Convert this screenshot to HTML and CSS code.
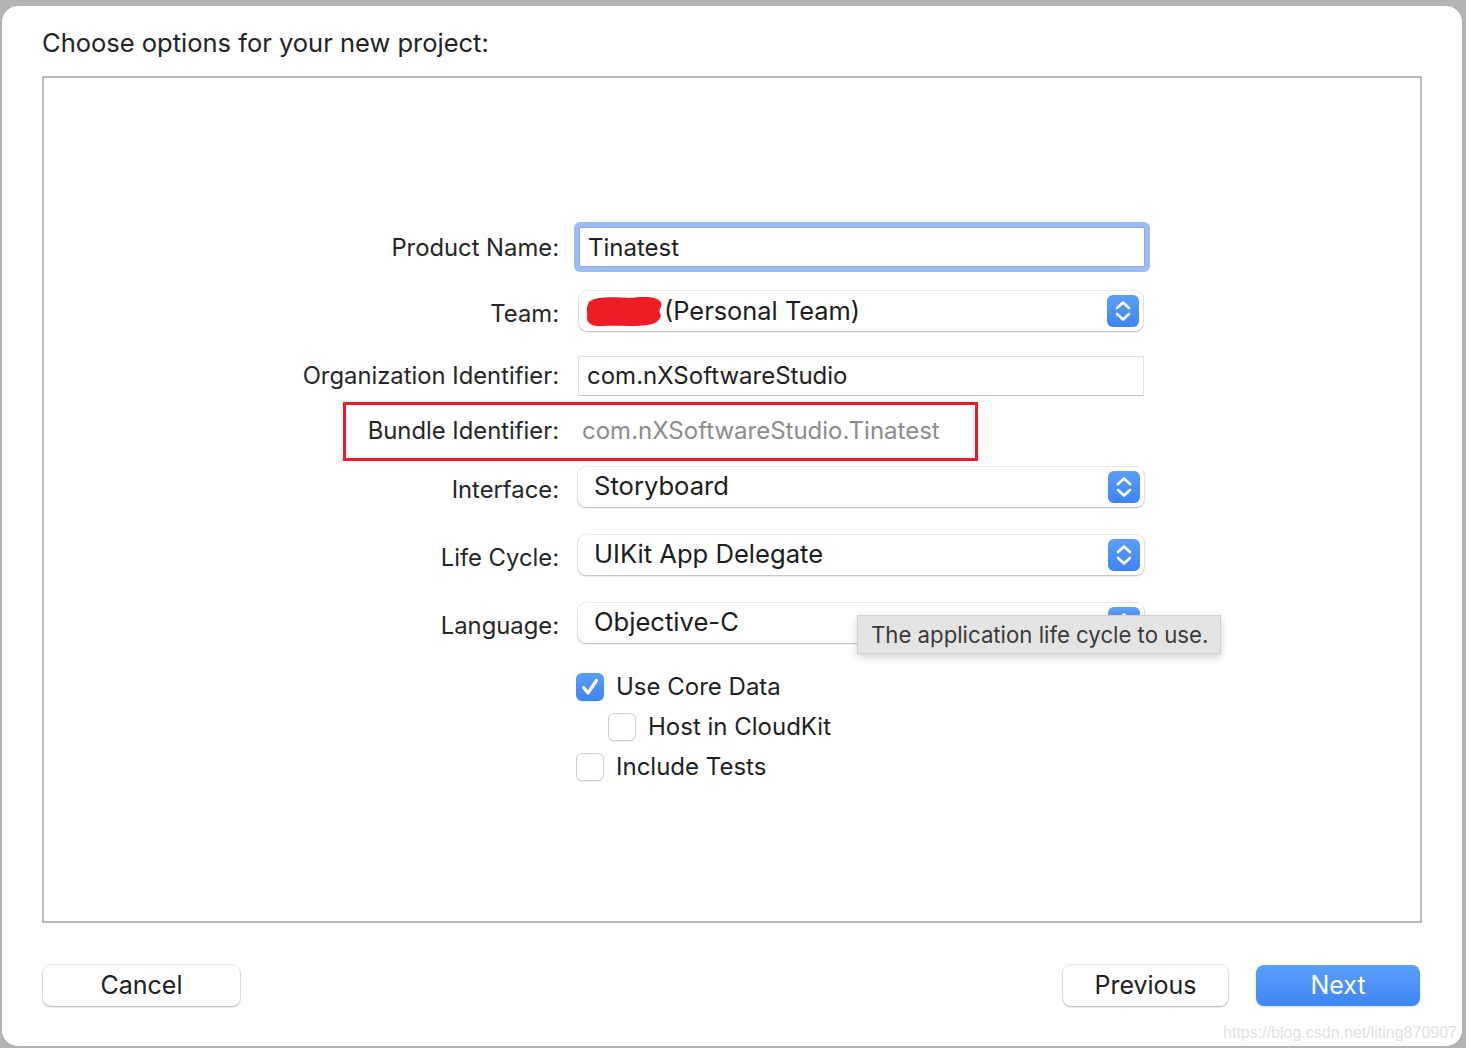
FILE: index.html
```html
<!DOCTYPE html>
<html lang="en">
<head>
  <meta charset="UTF-8">
  <title>Choose options for your new project</title>
  <link rel="stylesheet" href="styles.css">
</head>
<body>
  <div class="window">
    <h1 class="title">Choose options for your new project:</h1>

    <div class="panel">
      <div class="form">
        <div class="row row-product">
          <label class="label">Product Name:</label>
          <div class="field focused">Tinatest</div>
        </div>

        <div class="row row-team">
          <label class="label">Team:</label>
          <div class="popup popup-team">
            <svg class="scribble" width="78" height="34" viewBox="0 0 78 34">
              <path d="M4 8 C10 2 30 3 44 4 C56 3 70 1 76 8 C78 13 73 15 75 19 C78 24 72 30 62 31 C48 33 30 31 16 32 C8 33 1 29 2 23 C3 19 0 15 4 8 Z" fill="#ee1c25"/>
            </svg>
            <span class="popup-text">(Personal Team)</span>
            <span class="stepper">
              <svg width="32" height="32" viewBox="0 0 32 32">
                <path d="M10 13 L16 7.5 L22 13 M10 19 L16 24.5 L22 19" fill="none" stroke="#fff" stroke-width="2.6" stroke-linecap="round" stroke-linejoin="round"/>
              </svg>
            </span>
          </div>
        </div>

        <div class="row row-org">
          <label class="label">Organization Identifier:</label>
          <div class="field">com.nXSoftwareStudio</div>
        </div>

        <div class="row row-bundle">
          <label class="label">Bundle Identifier:</label>
          <div class="value-muted">com.nXSoftwareStudio.Tinatest</div>
        </div>

        <div class="row row-popup row-interface">
          <label class="label">Interface:</label>
          <div class="popup">
            <span class="popup-text">Storyboard</span>
            <span class="stepper">
              <svg width="32" height="32" viewBox="0 0 32 32">
                <path d="M10 13 L16 7.5 L22 13 M10 19 L16 24.5 L22 19" fill="none" stroke="#fff" stroke-width="2.6" stroke-linecap="round" stroke-linejoin="round"/>
              </svg>
            </span>
          </div>
        </div>

        <div class="row row-popup">
          <label class="label">Life Cycle:</label>
          <div class="popup">
            <span class="popup-text">UIKit App Delegate</span>
            <span class="stepper">
              <svg width="32" height="32" viewBox="0 0 32 32">
                <path d="M10 13 L16 7.5 L22 13 M10 19 L16 24.5 L22 19" fill="none" stroke="#fff" stroke-width="2.6" stroke-linecap="round" stroke-linejoin="round"/>
              </svg>
            </span>
          </div>
        </div>

        <div class="row row-popup row-language">
          <label class="label">Language:</label>
          <div class="popup">
            <span class="popup-text">Objective-C</span>
            <span class="stepper">
              <svg width="32" height="32" viewBox="0 0 32 32">
                <path d="M10 13 L16 7.5 L22 13 M10 19 L16 24.5 L22 19" fill="none" stroke="#fff" stroke-width="2.6" stroke-linecap="round" stroke-linejoin="round"/>
              </svg>
            </span>
          </div>
          <div class="tooltip">The application life cycle to use.</div>
        </div>

        <div class="row row-check row-check-first">
          <span></span>
          <div class="check">
            <span class="box checked">
              <svg width="28" height="28" viewBox="0 0 28 28">
                <path d="M7.5 14.5 L12 20 L20.5 7.5" fill="none" stroke="#fff" stroke-width="3.2" stroke-linecap="round" stroke-linejoin="round"/>
              </svg>
            </span>
            <span class="check-text">Use Core Data</span>
          </div>
        </div>

        <div class="row row-check">
          <span></span>
          <div class="check indent">
            <span class="box"></span>
            <span class="check-text">Host in CloudKit</span>
          </div>
        </div>

        <div class="row row-check">
          <span></span>
          <div class="check">
            <span class="box"></span>
            <span class="check-text">Include Tests</span>
          </div>
        </div>
      </div>
    </div>

    <div class="footer">
      <button class="btn btn-cancel">Cancel</button>
      <div class="footer-right">
        <button class="btn btn-previous">Previous</button>
        <button class="btn btn-next">Next</button>
      </div>
    </div>

    <div class="watermark">https://blog.csdn.net/liting870907</div>
  </div>
</body>
</html>
```

FILE: styles.css
```css
html, body {
  margin: 0;
  padding: 0;
  height: 1048px;
  overflow: hidden;
}

body {
  background-color: #b3b3b3;
  font-family: Inter, "Noto Sans", sans-serif;
  color: #222;
}

.window {
  position: relative;
  margin: 6px 4px 0 2px;
  height: 1040px;
  background-color: #fff;
  border-radius: 16px;
  box-sizing: border-box;
  padding: 22px 40px 0 40px;
}

.title {
  margin: 0;
  font-size: 25.5px;
  font-weight: 400;
  line-height: 30px;
  color: #232323;
}

.panel {
  margin-top: 18px;
  height: 847px;
  border: 2px solid #b9b9b9;
  box-sizing: border-box;
  padding-top: 144px;
}

.form {
  display: flex;
  flex-direction: column;
}

.row {
  position: relative;
  display: grid;
  grid-template-columns: 515px 566px;
  column-gap: 19px;
  align-items: center;
  height: 40px;
}

.label {
  text-align: right;
  font-size: 23.8px;
  color: #262626;
}

.row-popup .label,
.row-team .label {
  padding-top: 5px;
}

.row-product {
  height: 50px;
}

.row-team {
  margin-top: 19px;
}

.row-org {
  margin-top: 24px;
  height: 41px;
}

.row-bundle {
  margin-top: 14px;
}

.row-popup {
  margin-top: 28px;
}

.row-interface {
  margin-top: 17px;
}

/* text fields */
.field {
  height: 40px;
  box-sizing: border-box;
  padding-left: 8px;
  display: flex;
  align-items: center;
  font-size: 24px;
  color: #1e1e1e;
  background: #fff;
  border: 1px solid #e2e2e2;
  border-bottom-color: #c2c2c2;
}

.field.focused {
  margin-left: 1px;
  width: 566px;
  border: 1px solid #8ea9dc;
  border-radius: 2px;
  box-shadow: 0 0 0 5px #9dbbf3;
}

.value-muted {
  padding-left: 4px;
  font-size: 24px;
  color: #8c8c8c;
}

/* annotation box around bundle identifier */
.row-bundle::before {
  content: "";
  position: absolute;
  left: 299px;
  top: -8px;
  width: 635px;
  height: 59px;
  box-sizing: border-box;
  border: 3px solid #e81d27;
}

/* pop-up buttons */
.popup {
  height: 40px;
  box-sizing: border-box;
  display: flex;
  align-items: center;
  padding: 0 4px 0 16px;
  background: #fff;
  border-radius: 8px;
  box-shadow: 0 0 0 1px rgba(0, 0, 0, 0.07), 0 1px 2px rgba(0, 0, 0, 0.22);
}

.popup-team {
  margin-left: 1px;
  width: 564px;
  padding-left: 6px;
}

.scribble {
  margin-right: 1px;
}

.popup-text {
  flex: 1;
  font-size: 25.6px;
  color: #1c1c1c;
  line-height: 1;
  padding-bottom: 3px;
}

.popup-team .popup-text {
  font-size: 25.4px;
  padding-bottom: 0;
}

.stepper {
  width: 32px;
  height: 32px;
  border-radius: 6px;
  background: linear-gradient(#5d9ff9, #3d83f5);
  display: flex;
}

/* tooltip */
.tooltip {
  position: absolute;
  left: 813px;
  top: 12px;
  width: 364px;
  height: 39px;
  box-sizing: border-box;
  padding-left: 13px;
  display: flex;
  align-items: center;
  font-size: 22.2px;
  color: #3a3a3a;
  background: #e4e4e4;
  border: 1px solid #d2d2d2;
  box-shadow: 0 3px 8px rgba(0, 0, 0, 0.18);
  z-index: 2;
}

/* checkboxes */
.row-check {
  height: 28px;
  margin-top: 12px;
}

.row-check-first {
  margin-top: 29px;
}

.check {
  display: flex;
  align-items: center;
  margin-left: -2px;
}

.check.indent {
  margin-left: 30px;
}

.box {
  width: 28px;
  height: 28px;
  box-sizing: border-box;
  border-radius: 6px;
  background: #fff;
  border: 1px solid #cfcfcf;
  box-shadow: 0 1px 1px rgba(0, 0, 0, 0.08);
  display: flex;
}

.box.checked {
  border: none;
  background: linear-gradient(#5a9df9, #3e84f5);
}

.check-text {
  margin-left: 12px;
  font-size: 24px;
  color: #1f1f1f;
}

/* footer buttons */
.footer {
  margin-top: 42px;
  display: flex;
  justify-content: space-between;
  padding-left: 1px;
  padding-right: 2px;
}

.footer-right {
  display: flex;
  gap: 28px;
}

.btn {
  height: 41px;
  border: none;
  border-radius: 8px;
  font-family: Inter, "Noto Sans", sans-serif;
  font-size: 25px;
  color: #202020;
  background: #fff;
  box-shadow: 0 0 0 1px rgba(0, 0, 0, 0.08), 0 1px 2px rgba(0, 0, 0, 0.25);
  padding: 0 0 2px 0;
}

.btn-cancel {
  width: 197px;
}

.btn-previous {
  width: 165px;
}

.btn-next {
  width: 164px;
  color: #fff;
  background: linear-gradient(#5a9ffa, #3f86f6);
  box-shadow: 0 1px 2px rgba(0, 0, 0, 0.15);
}

.watermark {
  position: absolute;
  right: 5px;
  bottom: 4px;
  font-family: "Liberation Sans", Arial, sans-serif;
  font-size: 16px;
  color: #e2e2e2;
}
```
